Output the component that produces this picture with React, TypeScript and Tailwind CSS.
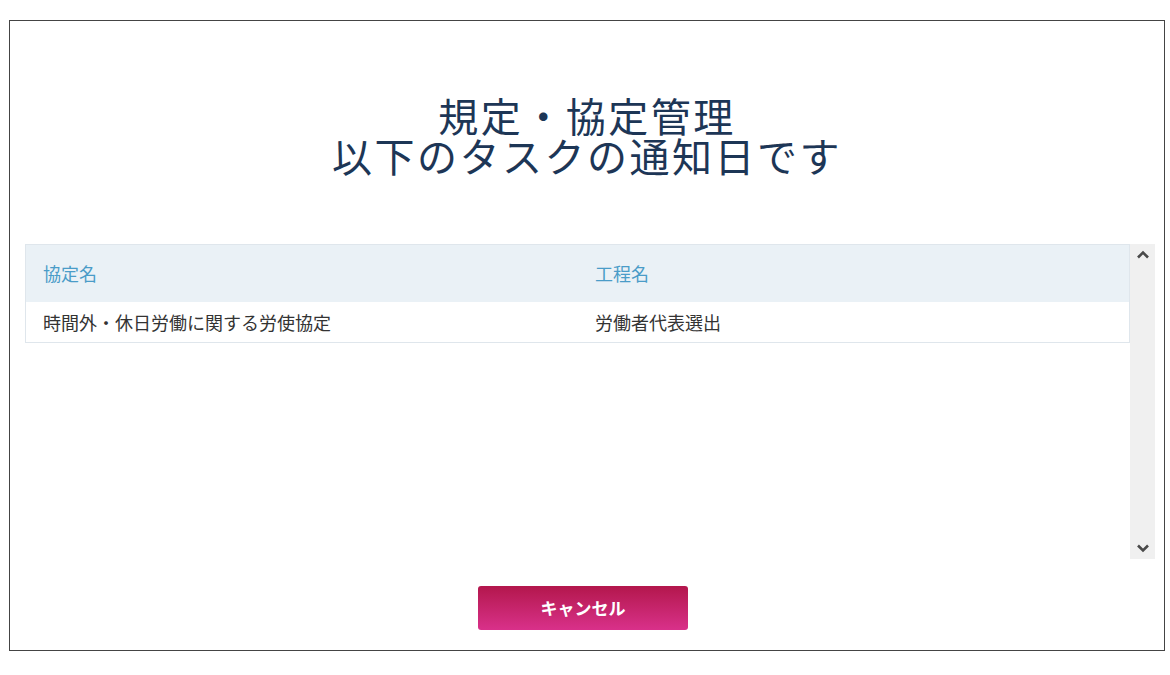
const jp = { fontFamily: '"Noto Sans CJK JP", "Noto Sans", sans-serif' };

function Chevron({ up }: { up?: boolean }) {
  return (
    <svg width="14" height="9" viewBox="0 0 14 9" className="text-[#4a4a4a]">
      <path
        d={up ? "M2 7.5 L7 2.5 L12 7.5" : "M2 1.5 L7 6.5 L12 1.5"}
        fill="none"
        stroke="currentColor"
        strokeWidth="2.6"
      />
    </svg>
  );
}

const rows = [{ name: "時間外・休日労働に関する労使協定", step: "労働者代表選出" }];

export default function App() {
  return (
    <div className="h-[675px] w-[1170px] bg-white pl-[9px] pt-[20px]" style={jp}>
      <div className="flex h-[631px] w-[1156px] flex-col border border-[#444]">
        <div className="pt-[74px] text-center text-[40px] leading-[40px] tracking-[2.5px] text-[#1d3656]">
          <div>規定・協定管理</div>
          <div>以下のタスクの通知日です</div>
        </div>

        <div className="mt-[69px] ml-[15px] mr-[9px] flex h-[315px]">
          <div className="flex-1">
            <div className="border border-[#dfe6ec]">
              <div className="grid h-[57px] grid-cols-[552px_1fr] items-center bg-[#eaf1f6] pl-[17px] text-[18px] text-[#4a9cc8]">
                <div>協定名</div>
                <div>工程名</div>
              </div>
              {rows.map((r) => (
                <div
                  key={r.name}
                  className="grid h-[40px] grid-cols-[552px_1fr] items-center bg-white pl-[17px] text-[18px] text-[#333]"
                >
                  <div>{r.name}</div>
                  <div>{r.step}</div>
                </div>
              ))}
            </div>
          </div>
          <div className="flex w-[25px] flex-col items-center justify-between bg-[#f0f0f0] py-[6px]">
            <Chevron up />
            <Chevron />
          </div>
        </div>

        <div className="mt-[27px] flex justify-center pr-[8px]">
          <button className="h-[44px] w-[210px] rounded-[3px] bg-gradient-to-b from-[#b3164c] to-[#d9308a] text-[17px] font-bold text-white">
            キャンセル
          </button>
        </div>
      </div>
    </div>
  );
}
